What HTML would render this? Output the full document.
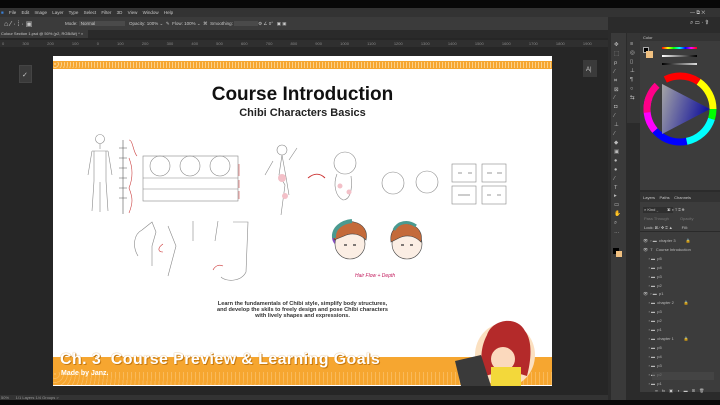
<!DOCTYPE html>
<html><head><meta charset="utf-8"><style>
*{margin:0;padding:0;box-sizing:border-box}
body{width:720px;height:405px;overflow:hidden;background:#262626;font-family:"Liberation Sans",sans-serif;position:relative}
.a{position:absolute}
.t{font-size:4.5px;color:#c8c8c8;white-space:nowrap}
</style></head><body>
<div class="a" style="left:0;top:0;width:720px;height:8px;background:#080808"></div>
<div class="a" style="left:0;top:8px;width:720px;height:9px;background:#333"></div>
<div class="a t" style="left:1px;top:10px;word-spacing:4px"><span style="color:#3a7fd5">■</span> File Edit Image Layer Type Select Filter 3D View Window Help</div>
<div class="a" style="left:0;top:17px;width:720px;height:13px;background:#3b3b3b"></div>
<div class="a t" style="left:4px;top:20px;font-size:7px">⌂ ⁄ · ⁞ · ▣</div>
<div class="a t" style="left:65px;top:21px">Mode: <span style="background:#4a4a4a;padding:0 30px 0 2px">Normal</span>&nbsp;&nbsp; Opacity: 100% ⌄ &nbsp;✎ &nbsp;Flow: 100% ⌄ &nbsp;⌘ &nbsp;Smoothing: <span style="background:#4a4a4a;padding:0 12px"> </span> ⚙ ∠ 0° &nbsp; ▣ ▣</div>
<div class="a" style="left:0;top:30px;width:720px;height:8px;background:#2a2a2a"></div>
<div class="a" style="left:0;top:30px;width:88px;height:8px;background:#3a3a3a"></div>
<div class="a t" style="left:1px;top:31px;font-size:4px">Colour Section 1.psd @ 50% (p2, RGB/8#) * ×</div>
<div class="a" style="left:0;top:40px;width:608px;height:7px;background:#2f2f2f"></div>
<div class="a t" style="left:2px;top:41px;font-size:4px;color:#888;word-spacing:17px">0 300 200 100 0 100 200 300 400 500 600 700 800 900 1000 1100 1200 1300 1400 1500 1600 1700 1800 1900 2000</div>
<div class="a" style="left:19px;top:65px;width:13px;height:18px;background:#3a3a3a;border:1px solid #444"></div>
<div class="a t" style="left:22px;top:71px;font-size:7px">✓</div>
<div class="a" style="left:583px;top:60px;width:14px;height:17px;background:#3a3a3a"></div>
<div class="a t" style="left:586px;top:67px;font-size:6px">A|</div>

<!-- slide -->
<div class="a" style="left:53px;top:56px;width:499px;height:330px;background:#fff"></div>
<div class="a" style="left:53px;top:61px;width:499px;height:8px;background:#f6a630"></div>
<div class="a" style="left:53px;top:62px;width:499px;height:6px;background:repeating-radial-gradient(circle at 2px 2px,#fbd08a 0 0.8px,transparent 1px 3px)"></div>
<div class="a" style="left:53px;top:84px;width:499px;text-align:center;font-weight:bold;font-size:19px;color:#111">Course Introduction</div>
<div class="a" style="left:53px;top:107px;width:499px;text-align:center;font-weight:bold;font-size:11px;color:#222">Chibi Characters Basics</div>
<svg class="a" style="left:53px;top:56px" width="499" height="330" fill="none" stroke="#888" stroke-width="0.6">
<circle cx="47" cy="83" r="4.5"/><path d="M47 88v5M39 95h16M39 95l-4 24M55 95l4 24M41 95v30l-2 30M53 95v30l2 30M47 126v30"/>
<path d="M70 84v74M66 92h8M66 102h8M66 112h8M66 122h8M66 132h8M66 142h8" stroke="#555"/>
<path d="M76 84c4 0 4 12 8 16M76 102c4 10 4 20 0 30c4 10 4 15 0 25" stroke="#c44"/>
<rect x="90" y="100" width="95" height="45"/><path d="M90 122h95M90 133h95"/>
<circle cx="107" cy="110" r="10"/><circle cx="137" cy="110" r="10"/><circle cx="167" cy="110" r="10"/>
<path d="M186 108v12M186 124v8M186 135v8" stroke="#c44"/>
<circle cx="229" cy="94" r="5"/><path d="M229 99l-3 20l6 10l-4 30M229 99l4 22l3 18M220 105l-8 14M236 104l8-12"/>
<circle cx="229" cy="122" r="4" fill="#f3c0c8" stroke="none"/><circle cx="232" cy="140" r="3" fill="#f3c0c8" stroke="none"/>
<path d="M255 122c6-5 12-5 17 0" stroke="#c33" stroke-width="1"/>
<circle cx="292" cy="107" r="11"/><path d="M284 118c-4 10-2 22 6 26c6 0 10-8 8-24"/>
<circle cx="287" cy="130" r="2.5" fill="#f3c0c8" stroke="none"/><circle cx="296" cy="136" r="2.5" fill="#f3c0c8" stroke="none"/>
<circle cx="340" cy="127" r="11"/><circle cx="374" cy="126" r="11"/>
<rect x="399" y="108" width="24" height="18"/><rect x="429" y="108" width="24" height="18"/><rect x="399" y="130" width="24" height="18"/><rect x="429" y="130" width="24" height="18"/>
<path d="M405 117h4M415 117h4M434 117h5M444 117h5M405 139h12M434 139h4M444 139h4" stroke="#333"/>
<path d="M85 200c-6-10-4-22 4-26l10-8l4 10l-4 14v20" /><path d="M115 170l8 20l-8 30M140 165v20M165 165l-3 20M180 166h15l-2 50c-5 10-20 10-25 5"/>
<path d="M110 196c-5 0 -6-4 0-8" stroke="#c33"/><path d="M170 210c-4-2-8 0-10 4" stroke="#c33"/>
<path d="M282 178c-4 8 6 14 12 10" stroke="#8a50c8" stroke-width="4"/><path d="M307 180c6 6 0 12-6 10" stroke="#8a50c8" stroke-width="4"/>
<circle cx="297" cy="188" r="15" fill="#fbeee4" stroke="#444"/>
<path d="M281 184c0-14 12-20 20-18c10 2 14 10 12 18c-6-6-14-8-22-4z" fill="#c46a3a" stroke="#444"/>
<path d="M281 182c-1-10 8-16 18-17" stroke="#4a9a90" stroke-width="4"/>
<circle cx="354" cy="188" r="15" fill="#fbeee4" stroke="#444"/>
<path d="M338 186c-2-14 10-20 18-18c10 2 14 10 12 18c-6-6-14-8-22-4z" fill="#c46a3a" stroke="#444"/>
<path d="M341 174c4-8 14-10 22-4" stroke="#4a9a90" stroke-width="3"/>
<path d="M291 189h3M300 189h3M348 189h3M357 189h3" stroke="#333" stroke-width="1.2"/>
</svg>
<div class="a" style="left:355px;top:273px;font-size:5px;color:#c2185b;font-style:italic">Hair Flow + Depth</div>
<div class="a" style="left:53px;top:301px;width:499px;text-align:center;font-weight:bold;font-size:5.6px;line-height:6.2px;color:#333">Learn the fundamentals of Chibi style, simplify body structures,<br>and develop the skils to freely design and pose Chibi characters<br>with lively shapes and expressions.</div>
<div class="a" style="left:53px;top:357px;width:499px;height:28px;background:#f6a630"></div>
<div class="a" style="left:53px;top:372px;width:499px;height:13px;background:repeating-radial-gradient(circle at 2px 2px,#fbc878 0 0.8px,transparent 1px 4px);opacity:.6"></div>
<div class="a" style="left:60px;top:351px;font-weight:bold;font-size:16px;color:#fff;letter-spacing:0.4px;text-shadow:0 0 1px #c77a10,1px 1px 0 #c77a10">Ch. 3 &nbsp;Course Preview &amp; Learning Goals</div>
<div class="a" style="left:61px;top:370px;font-weight:bold;font-size:7px;color:#fff">Made by Janz.</div>
<svg class="a" style="left:445px;top:315px" width="107" height="71">
<ellipse cx="60" cy="40" rx="30" ry="32" fill="#fbe0c0"/>
<path d="M42 20c5-16 30-20 38-4c8 10 6 30 2 45l-20-6l-22 6c-6-14-4-30 2-41z" fill="#b42a2a"/>
<circle cx="58" cy="44" r="12" fill="#fbd9bd"/>
<rect x="46" y="52" width="30" height="19" fill="#f3d83a"/>
<path d="M10 46l26-6l10 31h-30z" fill="#3a3a3a"/>
</svg>
<div class="a" style="left:0;top:395px;width:608px;height:6px;background:#333"></div>
<div class="a t" style="left:1px;top:395px;font-size:4px;color:#999">50% &nbsp;&nbsp;&nbsp;&nbsp; 1/1 Layers 1/4 Groups &gt;</div>
<div class="a" style="left:0;top:400px;width:720px;height:5px;background:#080808"></div>

<!-- right -->
<div class="a" style="left:608px;top:17px;width:112px;height:383px;background:#2b2b2b"></div>
<div class="a t" style="left:690px;top:20px;font-size:6px">⌕ ▭ · ⇧</div>
<div class="a t" style="left:690px;top:10px;font-size:5px">— ⧉ ✕</div>
<div class="a" style="left:611px;top:33px;width:15px;height:367px;background:#3a3a3a"></div>
<div class="a t" style="left:614px;top:41px;font-size:5.5px;line-height:8.9px;color:#bbb">✥<br>⬚<br>ρ<br>⁄<br>⌗<br>⊠<br>⁄<br>◘<br>⁄<br>⊥<br>⁄<br>◆<br>▣<br>●<br>●<br>⁄<br>T<br>▸<br>▭<br>✋<br>⌕<br>…</div>
<div class="a" style="left:613px;top:248px;width:6px;height:6px;background:#000"></div>
<div class="a" style="left:616px;top:251px;width:6px;height:6px;background:#f0c080"></div>
<div class="a" style="left:627px;top:33px;width:13px;height:90px;background:#353535"></div>
<div class="a t" style="left:630px;top:40px;font-size:5.5px;line-height:9px">≡<br>◎<br>▯<br>⊥<br>¶<br>○<br>⇆</div>
<div class="a" style="left:640px;top:33px;width:80px;height:157px;background:#3c3c3c"></div>
<div class="a" style="left:640px;top:33px;width:80px;height:8px;background:#333"></div>
<div class="a t" style="left:643px;top:35px;font-size:4px">Color</div>
<div class="a" style="left:643px;top:47px;width:6px;height:6px;background:#000;border:0.5px solid #aaa"></div>
<div class="a" style="left:646px;top:51px;width:7px;height:7px;background:#f0c080"></div>
<div class="a" style="left:662px;top:47px;width:35px;height:2px;background:linear-gradient(90deg,red,yellow,lime,cyan,blue,magenta,red)"></div>
<div class="a" style="left:662px;top:55px;width:35px;height:2px;background:linear-gradient(90deg,#fff,#000)"></div>
<div class="a" style="left:662px;top:63px;width:35px;height:2px;background:linear-gradient(90deg,#000,#ddd)"></div>
<svg class="a" style="left:640px;top:69px" width="80" height="80">
<defs><linearGradient id="g1" x1="0" y1="0" x2="1" y2="0.3"><stop offset="0" stop-color="#fff"/><stop offset="1" stop-color="#2020f0"/></linearGradient></defs>
<circle cx="40" cy="40" r="33" fill="none" stroke="#f0f" stroke-width="7" stroke-dasharray="35 200" stroke-dashoffset="-80"/>
<circle cx="40" cy="40" r="33" fill="none" stroke="#00f" stroke-width="7" stroke-dasharray="35 200" stroke-dashoffset="-45"/>
<circle cx="40" cy="40" r="33" fill="none" stroke="#0ff" stroke-width="7" stroke-dasharray="35 200" stroke-dashoffset="-10"/>
<circle cx="40" cy="40" r="33" fill="none" stroke="#0f0" stroke-width="7" stroke-dasharray="35 200" stroke-dashoffset="25"/>
<circle cx="40" cy="40" r="33" fill="none" stroke="#ff0" stroke-width="7" stroke-dasharray="35 200" stroke-dashoffset="60"/>
<circle cx="40" cy="40" r="33" fill="none" stroke="#f00" stroke-width="7" stroke-dasharray="35 200" stroke-dashoffset="95"/>
<circle cx="40" cy="40" r="33" fill="none" stroke="#f08" stroke-width="7" stroke-dasharray="30 200" stroke-dashoffset="130"/>
<polygon points="22,15 70,40 22,65" fill="url(#g1)"/>
<polygon points="22,15 70,40 22,65" fill="#000" opacity="0.35"/>
</svg>
<div class="a" style="left:640px;top:192px;width:80px;height:200px;background:#3c3c3c"></div>
<div class="a" style="left:640px;top:192px;width:80px;height:10px;background:#333"></div>
<div class="a t" style="left:643px;top:195px;font-size:4px">Layers &nbsp;&nbsp; Paths &nbsp;&nbsp; Channels</div>
<div class="a" style="left:643px;top:207px;width:30px;height:6px;background:#2f2f2f"></div>
<div class="a t" style="left:644px;top:207px;font-size:4px">⌕ Kind ⌄ &nbsp;&nbsp;&nbsp;&nbsp;&nbsp;&nbsp; ▣ ◑ T ⌗ ⊕</div>
<div class="a t" style="left:644px;top:216px;font-size:4px;color:#777">Pass Through &nbsp;&nbsp;&nbsp;&nbsp;&nbsp;&nbsp;&nbsp;&nbsp; Opacity</div>
<div class="a t" style="left:644px;top:225px;font-size:4px">Lock: ⊠ ⁄ ✥ ⌗ ▲ &nbsp;&nbsp;&nbsp;&nbsp;&nbsp;&nbsp; Fill:</div>
<div class="a" style="left:640px;top:231px;width:80px;height:1px;background:#2a2a2a"></div>
<div class="a t" style="left:643px;top:237px;font-size:4px;line-height:8.9px;color:#bbb;white-space:pre">👁  › ▬  chapter 3         🔒
👁  T   Course Introduction
     › ▬  p5
     › ▬  p4
     › ▬  p3
     › ▬  p2
👁  › ▬  p1
     › ▬  chapter 2         🔒
     › ▬  p3
     › ▬  p2
     › ▬  p1
     › ▬  chapter 1         🔒
     › ▬  p5
     › ▬  p4
     › ▬  p3
     › ▬  p2
     › ▬  p1</div>
<div class="a" style="left:652px;top:372px;width:62px;height:8px;background:#4a4a4a;opacity:.6"></div>
<div class="a t" style="left:655px;top:388px;font-size:4px;word-spacing:3px">∞ fx ▣ ◑ ▬ ⊞ 🗑</div>
</body></html>
